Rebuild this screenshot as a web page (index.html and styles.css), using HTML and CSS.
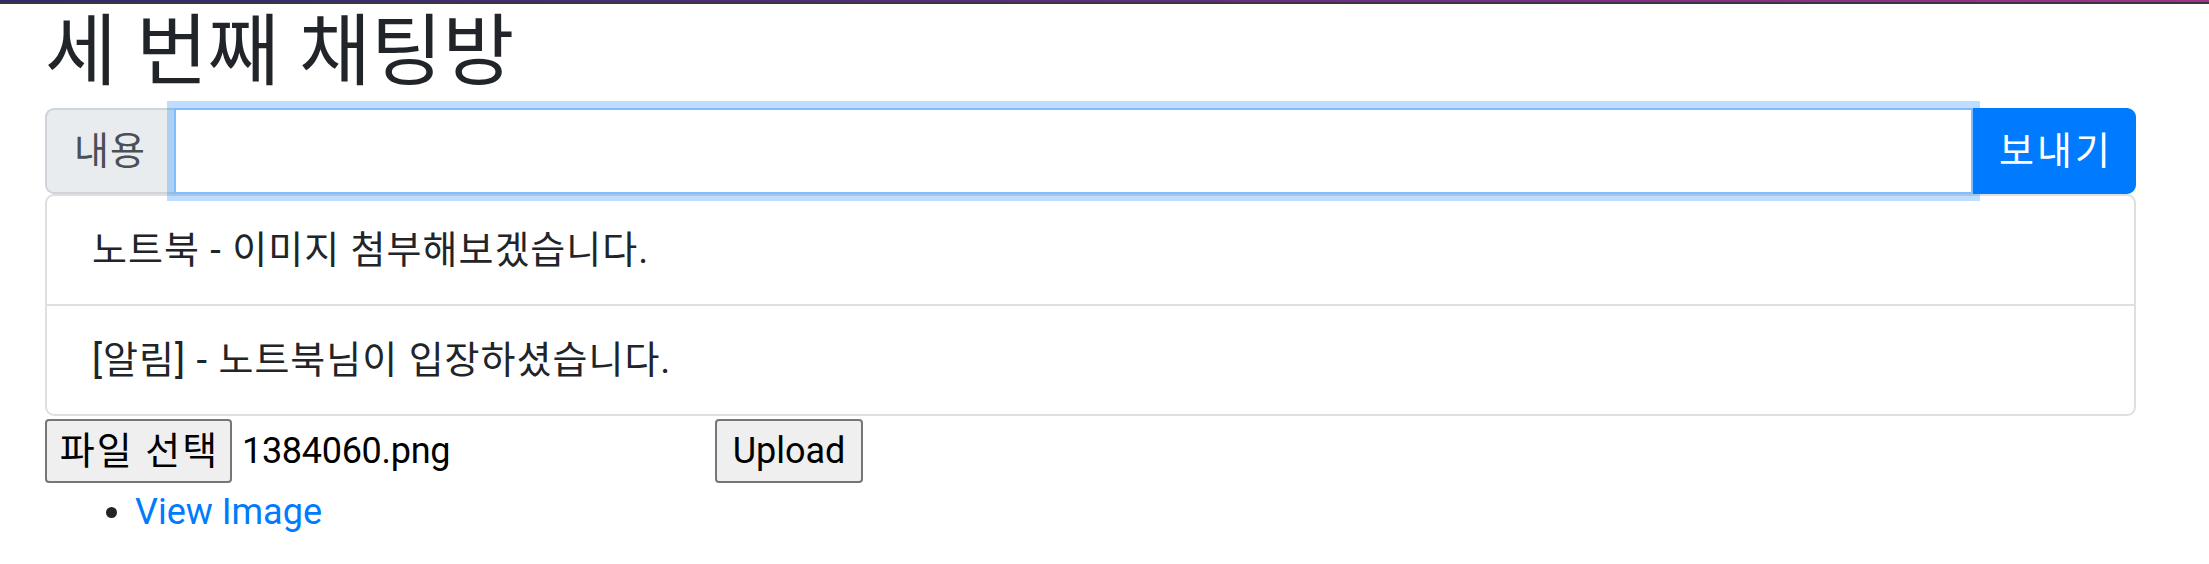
FILE: index.html
```html
<!DOCTYPE html>
<html lang="ko">
<head>
<meta charset="utf-8">
<title>세 번째 채팅방</title>
<link rel="stylesheet" href="styles.css">
</head>
<body>
<div class="topbar"></div>
<main class="page">
  <h2 class="title">세 번째 채팅방</h2>
  <div class="input-group">
    <span class="prepend">내용</span>
    <input class="field" type="text" aria-label="내용">
    <button class="send" type="button">보내기</button>
  </div>
  <ul class="messages">
    <li class="message">노트북 - 이미지 첨부해보겠습니다.</li>
    <li class="message">[알림] - 노트북님이 입장하셨습니다.</li>
  </ul>
  <form class="upload-row">
    <div class="file">
      <span class="file-btn">파일 선택</span>
      <span class="file-name">1384060.png</span>
    </div>
    <button class="upload" type="button">Upload</button>
  </form>
  <ul class="links">
    <li><a class="link" href="#">View Image</a></li>
  </ul>
</main>
</body>
</html>
```
FILE: styles.css
```css
html, body {
  margin: 0;
  padding: 0;
  background: #fff;
}

body {
  font-family: Roboto, "Noto Sans CJK KR", sans-serif;
  font-size: 36px;
  line-height: 54px;
  color: #212529;
}

.topbar {
  height: 2px;
  background: linear-gradient(90deg, #2e2a6c 0%, #5a2c80 45%, #a2308e 100%);
  border-bottom: 2px solid #38383a;
}

.page {
  padding: 0 73px 0 45px;
}

.title {
  margin: 0 0 12px 0;
  padding-top: 6px;
  font-size: 78px;
  line-height: 86px;
  font-weight: 400;
  color: #212529;
}

.input-group {
  display: flex;
  height: 86px;
}

.prepend {
  display: flex;
  align-items: center;
  box-sizing: border-box;
  width: 129px;
  padding: 0 27px;
  background: #e9ecef;
  border: 2px solid #ced4da;
  border-right: 0;
  border-radius: 9px 0 0 9px;
  color: #495057;
  font-size: 38px;
  letter-spacing: 1px;
  white-space: nowrap;
}

.field {
  flex: 1;
  position: relative;
  z-index: 3;
  margin: 0;
  box-sizing: border-box;
  height: 86px;
  border: 2px solid #80bdff;
  box-shadow: 0 0 0 7px rgba(0, 123, 255, 0.25);
  outline: none;
  background: #fff;
  padding: 0 27px;
  font: inherit;
}

.send {
  position: relative;
  z-index: 2;
  box-sizing: border-box;
  width: 163px;
  height: 86px;
  margin: 0;
  padding: 0 0 0 3px;
  border: 2px solid #007bff;
  border-radius: 0 9px 9px 0;
  background: #007bff;
  color: #fff;
  font: inherit;
  font-size: 38px;
  letter-spacing: 3px;
  white-space: nowrap;
}

.messages {
  list-style: none;
  margin: 0;
  padding: 0;
  border: 2px solid #dfdfdf;
  border-radius: 9px;
}

.message {
  padding: 27px 45px;
  font-size: 38px;
  line-height: 54px;
  letter-spacing: 1px;
}

.message + .message {
  border-top: 2px solid #dfdfdf;
}

.upload-row {
  display: flex;
  align-items: flex-start;
  height: 69px;
  margin: 0;
  padding-top: 3px;
  box-sizing: border-box;
}

.file {
  display: flex;
  align-items: center;
  width: 660px;
  margin-right: 10px;
}

.file-btn,
.upload {
  box-sizing: border-box;
  flex-shrink: 0;
  height: 64px;
  display: flex;
  align-items: center;
  padding: 0;
  background: #efefef;
  border: 2px solid #767676;
  border-radius: 4px;
  color: #000;
  font: inherit;
  line-height: 54px;
  white-space: nowrap;
}

.file-btn {
  width: 187px;
  justify-content: center;
  margin-right: 10px;
  font-size: 38px;
  letter-spacing: 2px;
  padding-left: 2px;
}

.file-name {
  color: #000;
  letter-spacing: -0.3px;
  white-space: nowrap;
}

.upload {
  width: 148px;
  justify-content: center;
  margin: 0;
}

.links {
  margin: 0;
  padding-left: 90px;
}

.link {
  color: #007bff;
  text-decoration: none;
}
```
